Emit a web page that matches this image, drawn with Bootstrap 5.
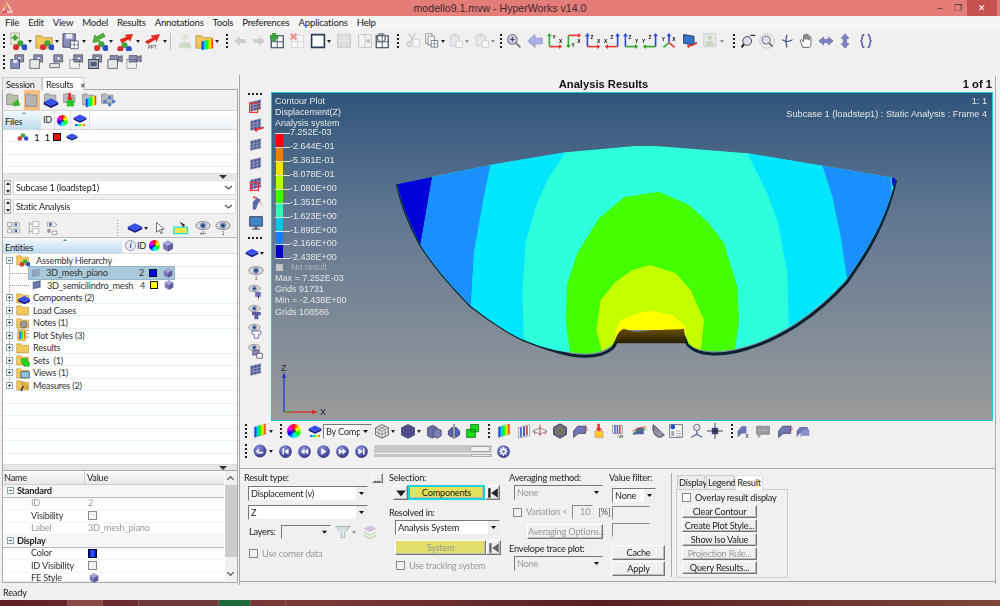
<!DOCTYPE html>
<html lang="en">
<head>
<meta charset="UTF-8">
<title>modello9.1.mvw - HyperWorks v14.0</title>
<link href="https://cdn.jsdelivr.net/npm/bootstrap@5.3.0/dist/css/bootstrap.min.css" rel="stylesheet">
<style>
html,body{height:606px;overflow:hidden}
body{width:1000px;background:#f0f0f0;color:#222;font:9.2px/1.2 Lato,"Liberation Sans",Arial,sans-serif;letter-spacing:-.22px}
.hw-app{filter:blur(.3px)}
.hw-app button,.hw-app select{letter-spacing:inherit}
svg{display:block;flex:none;overflow:visible}
.hw-title{height:16px;background:#e47d78;position:relative;text-align:center;font:10.6px/17px "Liberation Sans",Arial,sans-serif;letter-spacing:0;color:#3a2a2a}
.hw-logo{position:absolute;left:1px;top:2px;width:12px;height:12px}
.hw-winbtns{position:absolute;right:3px;top:0;height:16px}
.hw-winbtn{width:18px;text-align:center;font-size:9px;line-height:16px;color:#3a2a2a}
.hw-close{width:30px;background:#c75050;color:#fff}
.hw-menu{height:14px;background:#f5f5f5;padding-left:5px;gap:9px;line-height:14px;font-size:9.6px;margin-bottom:0}
.hw-menu li{list-style:none}
.hw-tb{height:22px;padding-left:3px}
.hw-tb2{height:20px;padding-left:3px;margin-bottom:3px}
.hw-dots{width:2px;height:17px;margin-right:2px;flex:none;background:radial-gradient(circle,#222 .9px,transparent 1px) 0 0/2px 4px repeat-y}
.hw-ic{width:19px;height:19px}
.hw-ic16{width:16px;height:16px}
.hw-ic15{width:15px;height:15px}
.hw-ic14{width:14px;height:14px}
.hw-ic12{width:12px;height:12px}
.hw-car{width:8px;height:12px;flex:none;position:relative}
.hw-car::after{content:"";position:absolute;left:1px;top:5px;border:2.5px solid transparent;border-top:3px solid #222;border-bottom:0}
.hw-faint{opacity:.45}
.hw-l1{margin-left:1px}.hw-l2{margin-left:2px}.hw-l3{margin-left:3px}.hw-l4{margin-left:4px}.hw-l5{margin-left:5px}.hw-l6{margin-left:6px}.hw-l7{margin-left:7px}.hw-l8{margin-left:8px}
.hw-vsep{width:1px;height:17px;background:#bbb;flex:none}
.hw-main{height:510px}
.hw-left{width:238px;flex:none;padding:2px 0 0 2px}
.hw-tabs{height:13px;border-bottom:1px solid #aaa;flex-wrap:nowrap}
.hw-tabs .nav-link{padding:0 2px 0 3px;width:40px;height:13px;line-height:13px;color:#222;border:1px solid #ccc;border-bottom:0;border-radius:0;margin:0;background:#ececec;white-space:nowrap;font-size:inherit}
.hw-tabs .nav-link.active{background:#fff;color:#222;border-color:#ccc;width:42px}
.hw-tabs .hw-x{margin-left:7px;font-size:7px}
.hw-box{border:1px solid #aaa;border-top:0;height:493px;background:#f0f0f0}
.hw-strip{height:20px;gap:3px;padding-left:2px;background:#f0f0f0}
.hw-hot{background:#f9bf80;align-self:stretch;display:flex;align-items:center}
.hw-head{height:20px;background:linear-gradient(#fff,#eef2f6);border-top:1px solid #d5d5d5;border-bottom:1px solid #d8d8d8;position:relative}
.hw-sort{background:linear-gradient(#f4fafd,#bcdcef);height:100%;padding:5px 0 0 2px;position:relative}
.hw-sort::after{content:"";position:absolute;left:50%;top:1px;border:2px solid transparent;border-bottom:2px solid #58a;border-top:0}
.hw-files{width:38px}
.hw-cell{padding:0 2px;height:100%;border-right:1px solid #ddd}
.hw-wheel{width:11px;height:11px;flex:none;border-radius:50%;background:radial-gradient(circle,#444 0 14%,transparent 18%),conic-gradient(#f00,#ff0,#0f0,#0ff,#00f,#f0f,#f00)}
.hw-wheel14{width:14px;height:14px}
.hw-lines{background:#fff repeating-linear-gradient(#fff 0 11.5px,#e7f2f9 11.5px 12.5px)}
.hw-filelist{height:43px;padding:0 0 0 13px;font-size:10px;color:#111}
.hw-filerow{height:13px}
.hw-sq{width:8px;height:8px;border:1px solid #111;flex:none}
.hw-red{background:#f00}.hw-blue{background:#00f}.hw-yel{background:#ff0}
.hw-split{height:6px;background:#e6e6e6;position:relative;border-top:1px solid #ddd}
.hw-split::after{content:"";position:absolute;right:10px;top:1px;border:4px solid transparent;border-top:4px solid #333;border-bottom:0}
.hw-selrow{height:15px;margin:1px 1px 4px 1px}
.hw-spin{width:7px;height:15px;flex:none;margin-right:2px;background:#fafafa;border:1px solid #aaa;position:relative}
.hw-spin::before,.hw-spin::after{content:"";position:absolute;left:.5px;border:2px solid transparent}
.hw-spin::before{top:1px;border-bottom:3px solid #222;border-top:0}
.hw-spin::after{bottom:1px;border-top:3px solid #222;border-bottom:0}
.hw-sel.form-select{height:15px;min-height:0;padding:0 14px 0 2px;font-size:inherit;line-height:13px;color:#222;border:1px solid;border-color:#777 #eee #eee #777;border-radius:0;background:#fff url("data:image/svg+xml,%3Csvg xmlns='http://www.w3.org/2000/svg' width='11' height='13'%3E%3Crect width='11' height='13' fill='%23eee'/%3E%3Cpath d='M3 5h5l-2.5 3z' fill='%23111'/%3E%3C/svg%3E") no-repeat right 0 center/11px 13px;box-shadow:none}
.hw-sel.hw-plain.form-select{background:#fff url("data:image/svg+xml,%3Csvg xmlns='http://www.w3.org/2000/svg' width='11' height='13'%3E%3Cpath d='M2 5l3.5 3L9 5' fill='none' stroke='%23555' stroke-width='1.2'/%3E%3C/svg%3E") no-repeat right 1px center/11px 13px;border:1px solid #ddd}
.hw-sel.form-select:disabled{background-color:#f0f0f0;color:#999}
.hw-tools{height:19px;padding-left:3px}
.hw-dotsb{width:1px;height:17px;margin-left:56px;margin-right:9px;flex:none;background:radial-gradient(circle,#999 .6px,transparent .7px) 0 0/1px 3px repeat-y}
.hw-entities{height:17px;position:relative;border-top:1px solid #bbb;border-bottom:1px solid #ddd;background:#f4f4f4}
.hw-entities .hw-sort{width:119px;padding-top:4px}
.hw-info{width:11px;height:11px;border-radius:50%;background:#e9e9f4;border:1px solid #99b;color:#44a;font:italic bold 8px/9px "Liberation Serif",serif;text-align:center;flex:none}
.hw-tree{height:210px;position:relative;color:#333}
.hw-tree::before{content:"";position:absolute;left:6px;top:8px;height:122px;border-left:1px dotted #999}
.hw-node{height:12.5px;position:relative;padding-left:2px;gap:3px;white-space:nowrap}
.hw-exp{width:7px;height:7px;flex:none;border:1px solid #8aa;background:#fff;margin-left:1px;position:relative;z-index:1}
.hw-exp::before{content:"";position:absolute;left:1px;right:1px;top:2px;height:1px;background:#456}
.hw-plus::after{content:"";position:absolute;top:1px;bottom:1px;left:2px;width:1px;background:#456}
.hw-child{padding-left:27px;gap:2px}
.hw-child::before{content:"";position:absolute;left:7px;top:6px;width:19px;border-top:1px dotted #999}
.hw-selected{background:#a9c9da;width:145px;margin-left:26px;padding-left:1px;outline:1px solid #8fb6cc}
.hw-selected::before{left:-19px;width:19px}
.hw-childname{margin-left:2px;width:84px}
.hw-num{width:12px;text-align:right;margin-right:3px}
.hw-propwrap{height:111px;border-top:1px solid #aaa;background:#fff}
.hw-props{width:221px;flex:none}
.hw-phead{height:14px;line-height:14px;background:linear-gradient(#fdfdfd,#e8e8e8);border-bottom:1px solid #ccc}
.hw-phead span:first-child{width:82px;padding-left:1px;border-right:1px solid #ccc}
.hw-phead span:last-child{padding-left:2px}
.hw-group{height:12.5px;line-height:12.5px;font-weight:bold;background:#f6f6f6;border-bottom:1px solid #bbb;gap:3px;padding-left:3px}
.hw-prop{height:12.5px;line-height:12px;border-bottom:1px solid #eef4f8;padding-left:28px;color:#333}
.hw-prop>span:first-child{width:57px}
.hw-dim{color:#999}
.hw-check{appearance:none;width:9px;height:9px;flex:none;margin:0;border-radius:0;border:1px solid #888;background:#f2f2f2}
.hw-colorbar{width:9px;height:9px;background:linear-gradient(90deg,#00c,#36f 50%,#00c);border:1px solid #002;flex:none}
.hw-scroll{width:12px;flex:none;background:#f0f0f0;position:relative;padding-top:12px;margin-left:1px;height:100%}
.hw-scroll::before,.hw-scroll::after{content:"";position:absolute;left:3px;width:5px;height:5px;border:solid #444;border-width:1px 0 0 1px;transform:rotate(45deg)}
.hw-scroll::before{top:6px}
.hw-scroll::after{bottom:6px;transform:rotate(225deg)}
.hw-thumb{height:72px;background:#cdcdcd;margin-top:2px}
.hw-right{width:760px;flex:none;border-left:1px solid #a8a8a8;margin-left:1px;position:relative}
.hw-right::after{content:"";position:absolute;right:3px;top:1px;height:508px;border-right:1px solid #aaa}
.hw-vhead{height:15px;margin-top:2px;width:753px;font:bold 11.2px/15px "Liberation Sans",Arial,sans-serif;letter-spacing:0;color:#111;position:relative;text-align:center;padding-right:26px}
.hw-pagecount{position:absolute;right:1px;top:0}
.hw-vrow{height:329px}
.hw-side{width:31px;flex:none;padding-top:1px;align-items:center}
.hw-hdots{width:17px;height:3px;flex:none;background:radial-gradient(circle,#222 .8px,transparent .9px) 0 0/4px 2px repeat-x;margin:0}
.hw-slot{height:19.5px;width:100%;justify-content:center;align-items:center}
.hw-view{width:722px;flex:none;height:329px;position:relative;border:1px solid #19c9d8;background:linear-gradient(#2f5479,#5d7491 34%,#9a9b9b);color:#e6e6e6;font:9px/1.2 "Liberation Sans",Arial,sans-serif;letter-spacing:0;overflow:hidden}
.hw-shape{position:absolute;left:117px;top:47px;width:520px;height:250px}
.hw-legend{position:absolute;left:3px;top:3px;line-height:11.1px}
.hw-scale{position:relative;padding-left:15px;margin:-3px 0 0 0}
.hw-val{height:13.9px;line-height:13.9px;position:relative}
.hw-val::before{content:"";position:absolute;left:-15px;width:15px;top:7px;border-top:1px solid #ddd}
.hw-bar{position:absolute;left:1px;top:7px;width:7px}
.hw-bar div{height:13.9px}
.hw-b1{background:#f00}.hw-b2{background:#ff7a00}.hw-b3{background:#ffe000}.hw-b4{background:#b4ff00}.hw-b5{background:#3cff00}.hw-b6{background:#2dffb4}.hw-b7{background:#00c8e6}.hw-b8{background:#1a7dff}.hw-b9{background:#0000c8}
.hw-nores{color:#b5b5b5;padding-left:16px;position:relative;margin-top:-3px}
.hw-nores::before{content:"";position:absolute;left:1px;top:2px;width:7px;height:7px;background:#c4c4c4}
.hw-topright{position:absolute;right:5px;top:2px;text-align:right;line-height:13px;font-size:9.2px}
.hw-triad{position:absolute;left:2px;bottom:2px;width:60px;height:52px}
.hw-tb3{height:20px;padding-left:5px}
.hw-sel.hw-combo.form-select{width:49px;margin-left:1px;background-color:#fff;padding-right:11px}
.hw-sbar{width:118px;flex:none;margin-left:5px}
.hw-s1{height:8px;background:#c6c6c6;border:1px solid #ccc;position:relative;margin-bottom:1px}
.hw-s2{height:3px;background:#c6c6c6;position:relative}
.hw-knob{position:absolute;right:1px;top:0;width:20px;height:100%;background:#eee;border:1px solid #aaa}
.hw-panel{height:114px;padding:4px 0 0 4px;margin-top:7px;border-top:1px solid #a8a8a8;border-bottom:1px solid #a8a8a8;width:755px}
.hw-c1{width:141px;flex:none}
.hw-c2{width:116px;margin-left:4px;flex:none}
.hw-c3{width:96px;margin-left:4px;flex:none}
.hw-c4{width:60px;margin-left:4px;flex:none}
.hw-c5{margin-left:4px;width:112px;flex:none}
.hw-vbar{width:1px;height:104px;background:#aaa;margin-left:2px;flex:none}
.hw-lab{height:10px;line-height:10px;white-space:nowrap}
.hw-btn.btn{border-radius:0;height:14px;padding:0;font-size:inherit;line-height:12px;color:#222;background:#f0f0f0;border:1px solid;border-color:#fff #777 #777 #fff;box-shadow:inset -1px -1px 0 #bbb;white-space:nowrap}
.hw-btn.btn:disabled{color:#999;opacity:1;background:#f0f0f0;border-color:#fff #777 #777 #fff}
.hw-dotbtn.btn{width:11px;height:10px;line-height:5px;margin-left:auto;margin-right:2px}
.hw-f1{margin:3px 0 0 4px;width:120px}
.hw-f2{margin:4px 0 0 4px;width:120px}
.hw-layers{margin:5px 0 0 5px;height:14px}
.hw-laysel.form-select{width:50px;height:14px;margin-left:5px}
.hw-chkrow{gap:4px;color:#999;white-space:nowrap}
.hw-cr1{margin:9px 0 0 5px}
.hw-selbtns{margin:2px 0 0 4px;height:15px;width:107px}
.hw-hbtn.btn{width:15px;height:15px;flex:none;font-size:7px}
.hw-yellow.btn{background:#e4e25d;height:15px;flex:1}
.hw-yellow.btn:disabled{background:#e2e06a;color:#999}
.hw-active.btn{border:2px solid #19d3d8}
.hw-lab2{margin-top:8px}
.hw-f3{margin:2px 0 0 6px;width:105px}
.hw-selbtns2{margin:5px 0 0 6px;height:15px;width:106px}
.hw-cr2{margin:5px 0 0 7px}
.hw-f4{margin:2px 0 0 5px;width:89px}
.hw-cr3{margin:5px 0 0 4px;height:14px}
.hw-num10{width:21px;height:14px;margin-left:1px;border:1px solid;border-color:#888 #eee #eee #888;color:#999;text-align:right;padding-right:2px;line-height:12px;flex:none}
.hw-pct{margin-left:1px;color:#555}
.hw-optbtn.btn{width:76px;margin:5px 0 0 18px;height:15px}
.hw-lab3{margin:5px 0 0 0}
.hw-f5.form-select{margin:5px 0 0 3px;width:44px;background-color:#fff}
.hw-input{width:38px;height:14px;margin:3px 0 0 3px;border:1px solid;border-color:#888 #eee #eee #888;background:#f0f0f0}
.hw-bigbtn.btn{width:53px;height:15px;margin:8px 0 0 3px;display:block}
.hw-bigbtn.hw-next.btn{margin-top:1px}
.hw-minitabs{height:14px;margin-top:2px;gap:1px;padding-left:1px;border:0;flex-wrap:nowrap}
.hw-minitabs .nav-link{padding:0 1px;height:14px;width:28px;text-align:center;font-size:inherit;line-height:13px;color:#222;border:1px solid #ccc;border-bottom:0;border-radius:0;background:#ececec;margin:0}
.hw-minitabs .nav-link.active{background:#fff;color:#222;height:15px;position:relative;z-index:1}
.hw-tabbox{width:112px;height:89px;border:1px solid #ccc;padding:3px 0 0 5px}
.hw-tabbtn.btn{display:block;width:75px;height:13px;margin-bottom:1px;line-height:11px}
.hw-ovl{gap:4px;margin-bottom:3px;height:9px;white-space:nowrap}
.hw-check.hw-w{background:#fff}
.hw-status{height:15px;line-height:15px;padding-left:3px}
.hw-task{height:6px;background:linear-gradient(90deg,#5e2026,#7a3b38 30%,#5a1d22 60%,#7d4638)}
.hw-task div{height:100%;border-right:1px solid #8c5a55}
.hw-t1{width:68px}.hw-t2{width:35px;background:#8a4a45}.hw-t3{width:36px}.hw-t4{width:80px;background:#6d3a3a}.hw-t5{width:32px;background:#1d6a3d}.hw-t6{width:35px}
</style>
</head>
<body>
<svg width="0" height="0" class="position-absolute">
<defs>
<linearGradient id="rbw" x1="0" x2="1" y1="0" y2="0"><stop offset="0" stop-color="#00f"/><stop offset=".25" stop-color="#0cf"/><stop offset=".5" stop-color="#0f0"/><stop offset=".75" stop-color="#ff0"/><stop offset="1" stop-color="#f00"/></linearGradient>
<radialGradient id="med" cx=".4" cy=".3" r=".8"><stop offset="0" stop-color="#8e94d8"/><stop offset=".6" stop-color="#4d53a5"/><stop offset="1" stop-color="#2c3178"/></radialGradient>
<linearGradient id="notch" x1="0" x2="0" y1="0" y2="1"><stop offset="0" stop-color="#6b5000"/><stop offset="1" stop-color="#1a1500"/></linearGradient>
<g id="balls"><circle cx="10" cy="11" r="3.2" fill="#3ca83c"/><circle cx="5.5" cy="15" r="3.2" fill="#d63030"/><circle cx="14.5" cy="15" r="3.2" fill="#2c4fc4"/></g>
<path id="folder" d="M1 4h6l2 2h9v11H1z" fill="#f2c75c" stroke="#b88c2e" stroke-width=".8"/>
<g id="win"><path d="M1.5 2.5h15v15h-15z" fill="#fff" stroke="#2a3a55" stroke-width="1.4"/><path d="M9 2.5v15M1.5 10h15" stroke="#2a3a55"/></g>
<g id="grid"><path d="M3 5l13-3v12L3 17z" fill="#4e5a98" stroke="#bbb" stroke-width=".6"/><path d="M7 4v12M11.500 3v12M3 9.500l13-3M3 13l13-3" stroke="#c8c8d8" stroke-width=".6"/></g>
<g id="eyeb"><ellipse cx="10" cy="7" rx="9" ry="5" fill="#d8d8d8" stroke="#777"/><circle cx="10" cy="7" r="3.500" fill="#5c78b8"/><circle cx="10" cy="7" r="1.300" fill="#123"/></g>
<g id="cubep"><path d="M10 2l7 4v8l-7 4-7-4V6z" fill="#7a78b8"/><path d="M10 2l7 4-7 4-7-4z" fill="#a6a4d8"/><path d="M10 10v8l7-4V6z" fill="#5f5c9c"/></g>
<g id="slab"><path d="M10 12l9-4.500v3L10 15 1 10.500v-3z" fill="#131a8a"/><path d="M10 3l9 4.500-9 4.500-9-4.500z" fill="#3350e8"/></g>
<g id="cam"><path d="M6 1h11v9H6z" fill="#8d8dba" stroke="#555"/><circle cx="12" cy="5.500" r="2.500" fill="#dde" stroke="#444" stroke-width=".6"/></g>
<symbol id="i-balls" viewBox="0 0 20 20"><use href="#balls" y="-3"/></symbol>
<symbol id="i-folder" viewBox="0 0 20 20"><use href="#folder"/></symbol>
<symbol id="i-new" viewBox="0 0 20 20"><path d="M3 1h9v12H3z" fill="#f6f1d0" stroke="#aaa"/><path d="M6 3h3v2h2v2H9v2H6V7H4V5h2z" fill="#3aa53a"/><use href="#balls" y="1" x="3"/></symbol>
<symbol id="i-open" viewBox="0 0 20 20"><use href="#folder"/><use href="#balls" x="3" y="1"/></symbol>
<symbol id="i-comp" viewBox="0 0 20 20"><use href="#folder"/><use href="#slab" x="2" y="4"/></symbol>
<symbol id="i-notes" viewBox="0 0 20 20"><use href="#folder"/><circle cx="11" cy="12" r="5" fill="#999" stroke="#666"/></symbol>
<symbol id="i-sets" viewBox="0 0 20 20"><use href="#folder"/><path d="M8 8h8v5h3v6h-8v-4H8z" fill="#1fd91f" stroke="#0a7a0a" stroke-width=".6"/></symbol>
<symbol id="i-views" viewBox="0 0 20 20"><use href="#folder"/><path d="M7 8h12v9H7z" fill="#8fc4e6" stroke="#345"/></symbol>
<symbol id="i-meas" viewBox="0 0 20 20"><use href="#folder"/><path d="M6 18l5-10 2 1-5 10z" fill="#334"/><path d="M10 5l8 8-3 3-8-8z" fill="#e2b23c" stroke="#654" stroke-width=".5"/></symbol>
<symbol id="i-styles" viewBox="0 0 20 20"><path d="M2 2h12v16H2z" fill="#f2c75c" stroke="#b88c2e" stroke-width=".7"/><path d="M5 5l8-1v11l-8 1z" fill="url(#rbw)"/><path d="M15 3h3M15 8h3M15 13h3" stroke="#444"/></symbol>
<symbol id="i-save" viewBox="0 0 20 20"><path d="M1 2h13v14H1z" fill="#8a8ec0" stroke="#445"/><path d="M4 2h7v5H4z" fill="#e8e8f4"/><g transform="translate(8 8) scale(.55)"><use href="#win"/></g></symbol>
<symbol id="i-ag" viewBox="0 0 20 20"><path d="M15 1L8 5 6 3 4 11l8-1-2-2 7-3z" fill="#49b530" stroke="#2a7a1a" stroke-width=".5"/><use href="#balls" x="3" y="2"/></symbol>
<symbol id="i-ar" viewBox="0 0 20 20"><path d="M4 8l7-3-2-2 9-1-3 8-2-2-7 4z" fill="#e22c20"/><use href="#balls" x="-1" y="3"/></symbol>
<symbol id="i-ppt" viewBox="0 0 20 20"><path d="M2 10l8-4-2-2 10-2-4 9-1-3-8 5z" fill="#e22c20"/><text x="5" y="18" font-size="5" fill="#444" font-family="Liberation Sans">PPT</text></symbol>
<symbol id="i-person" viewBox="0 0 20 20"><circle cx="10" cy="5" r="4" fill="#c9d8bb"/><path d="M2 19c0-6 3-8 8-8s8 2 8 8z" fill="#a6c89a"/></symbol>
<symbol id="i-fcol" viewBox="0 0 20 20"><use href="#folder"/><path d="M7 10l12-3v10l-12 2z" fill="url(#rbw)"/></symbol>
<symbol id="i-l" viewBox="0 0 20 20"><path d="M2 10l8-7v4h8v6h-8v4z" fill="#ccc"/></symbol>
<symbol id="i-r" viewBox="0 0 20 20"><path d="M18 10l-8-7v4H2v6h8v4z" fill="#ccc"/></symbol>
<symbol id="i-wadd" viewBox="0 0 20 20"><use href="#win" y="1"/><path d="M3 0h4v3h3v4H7v3H3V7H0V3h3z" fill="#3aa53a" stroke="#1f6a1f" stroke-width=".5"/></symbol>
<symbol id="i-wdel" viewBox="0 0 20 20" opacity=".55"><path d="M2 3h15v15H2z" fill="#fff" stroke="#bbb"/><path d="M9.500 3v15M2 10.500h15" stroke="#bbb"/><path d="M1 1l7 7M8 1L1 8" stroke="#e43" stroke-width="2.600"/></symbol>
<symbol id="i-wbig" viewBox="0 0 20 20"><path d="M2 2h16v16H2z" fill="#fff" stroke="#2a3a55" stroke-width="2"/></symbol>
<symbol id="i-wg1" viewBox="0 0 20 20"><path d="M2 2h16v16H2z" fill="#ddd" stroke="#bbb"/><path d="M10 2v16M2 10h16" stroke="#eee"/></symbol>
<symbol id="i-wg2" viewBox="0 0 20 20"><path d="M2 2h16v16H2z" fill="#f2f2f2" stroke="#bbb"/><path d="M10 2v16" stroke="#bbb"/><path d="M12 8h4v4h-4z" fill="#bbb"/></symbol>
<symbol id="i-wsync" viewBox="0 0 20 20"><use href="#win" y="1"/><circle cx="8" cy="6" r="5" fill="none" stroke="#777" stroke-width="2"/></symbol>
<symbol id="i-cut" viewBox="0 0 20 20" opacity=".5"><path d="M5 1l6 10M13 1L7 11" stroke="#999" stroke-width="1.500"/><circle cx="5" cy="14" r="2.600" fill="none" stroke="#999" stroke-width="1.500"/><path d="M10 8h8v9h-8z" fill="#fff" stroke="#aaa"/></symbol>
<symbol id="i-copy" viewBox="0 0 20 20"><path d="M2 1h8v12H2z" fill="#fff" stroke="#777"/><path d="M5 4h8v11H5z" fill="#fff" stroke="#777"/><g transform="translate(8 8) scale(.55)"><use href="#win"/></g></symbol>
<symbol id="i-paste" viewBox="0 0 20 20" opacity=".45"><path d="M3 3h11v13H3z" fill="#d4daf0" stroke="#999"/><path d="M6 1h5v3H6z" fill="#aaa"/><path d="M10 10h8v8h-8z" fill="#fff" stroke="#999"/></symbol>
<symbol id="i-zoomb" viewBox="0 0 20 20"><circle cx="8" cy="8" r="6" fill="#c9cbe2" stroke="#777" stroke-width="1.300"/><path d="M12 12l6 6" stroke="#777" stroke-width="2.500"/><path d="M5 8h6M8 5v6" stroke="#445" stroke-width="1.200"/></symbol>
<symbol id="i-pl" viewBox="0 0 20 20"><path d="M1 10l9-8v4.500h9v7h-9V18z" fill="#aeb0e8" stroke="#8d8fc8"/></symbol>
<symbol id="i-screen" viewBox="0 0 20 20"><path d="M2 2l13 2v11L2 13z" fill="#2d77c9" stroke="#224"/><path d="M18 11l-9 5v-2.500l-3 3 3 3v-2l10-4z" fill="#e22c20"/></symbol>
<symbol id="i-ghost" viewBox="0 0 20 20" opacity=".6"><path d="M1 1h15v16H1z" fill="#dfe6e2" stroke="#aaa"/><circle cx="8.500" cy="6" r="3" fill="#a9c69c"/><path d="M3 16c0-4 2-6 5.500-6s5.500 2 5.500 6z" fill="#a9c69c"/></symbol>
<symbol id="i-zm" viewBox="0 0 20 20"><circle cx="9" cy="10" r="5.500" fill="#dfe0ef" stroke="#444" stroke-width="1.200"/><path d="M5 14l-3 4" stroke="#222" stroke-width="2.500"/><path d="M13 3h6" stroke="#333" stroke-width="1.600"/></symbol>
<symbol id="i-zg" viewBox="0 0 20 20"><circle cx="10" cy="10" r="9" fill="none" stroke="#999" stroke-dasharray="2 1.500"/><circle cx="9" cy="9" r="5" fill="#dfe0ef" stroke="#666" stroke-width="1.200"/><path d="M13 13l4 4" stroke="#666" stroke-width="2.200"/></symbol>
<symbol id="i-rot" viewBox="0 0 20 20"><path d="M10 1c-2 6-2 12 0 18M3 8c5 4 9 4 15 0" fill="none" stroke="#334a78" stroke-width="1.600"/></symbol>
<symbol id="i-hand" viewBox="0 0 20 20"><path d="M5 18C3 13 1 11 2 9s3 1 3.500 2V4c0-2 2-2 2 0v4V2.500c0-2 2.500-2 2.500 0V8V3.500c0-2 2.500-2 2.500 0V9V6c0-2 2.500-2 2.500 0v7c0 3-1 5-2 5z" fill="#fff" stroke="#333" stroke-width=".9"/></symbol>
<symbol id="i-hh" viewBox="0 0 20 20"><path d="M1 10l6-5v3h6V5l6 5-6 5v-3H7v3z" fill="#7d80c6" stroke="#4b4e92" stroke-width=".6"/></symbol>
<symbol id="i-vv" viewBox="0 0 20 20"><path d="M10 1l5 6h-3v6h3l-5 6-5-6h3V7H5z" fill="#7d80c6" stroke="#4b4e92" stroke-width=".6"/></symbol>
<symbol id="i-br" viewBox="0 0 20 20"><path d="M8 2C3 2 7 10 3 10c4 0 0 8 5 8M12 2c5 0 1 8 5 8-4 0 0 8-5 8" fill="none" stroke="#5f62aa" stroke-width="2"/></symbol>
<symbol id="c1" viewBox="0 0 20 20"><use href="#cam"/><path d="M1 7h11v11H1z" fill="#8a8ec0" stroke="#345"/><path d="M4 7h5v4H4z" fill="#eee"/></symbol>
<symbol id="c2" viewBox="0 0 20 20"><use href="#cam"/><path d="M1 7h12v11H1z" fill="#e8e8e8" stroke="#456"/></symbol>
<symbol id="c3" viewBox="0 0 20 20"><use href="#cam"/><path d="M1 12h12v5H1z" fill="#e8e8e8" stroke="#456"/></symbol>
<symbol id="c4" viewBox="0 0 20 20"><use href="#cam"/><path d="M1 7h12v11H1z" fill="none" stroke="#456" stroke-dasharray="1.500 1"/></symbol>
<symbol id="c5" viewBox="0 0 20 20"><use href="#cam"/><path d="M1 7h12v11H1z" fill="#cfd6e6" stroke="#345" stroke-width="1.400"/><path d="M3 9.500h8v6H3z" fill="#557"/></symbol>
<symbol id="c6" viewBox="0 0 20 20"><path d="M4 2h10v8H4z" fill="#8d8dba" stroke="#555"/><path d="M14 4l5-2v8l-5-2z" fill="#8d8dba" stroke="#555"/><path d="M1 7h12v11H1z" fill="#e8e8e8" stroke="#456"/></symbol>
<symbol id="c7" viewBox="0 0 20 20"><path d="M4 2h10v8H4z" fill="#8d8dba" stroke="#555"/><path d="M14 4l5-2v8l-5-2z" fill="#8d8dba" stroke="#555"/><path d="M1 7h12v11H1z" fill="none" stroke="#456" stroke-dasharray="1.500 1"/></symbol>
<symbol id="p1" viewBox="0 0 20 20"><path d="M2 3l5-1 2 2h7v12H2z" fill="#b6c0a6" stroke="#8a8a8a"/><path d="M7 16l9-7v-1l3 9-9 1 2-3-3 1z" fill="#3fb52a"/></symbol>
<symbol id="p2" viewBox="0 0 20 20"><path d="M2 3l5-1 2 2h7v14H2z" fill="#b4b4b4" stroke="#888"/></symbol>
<symbol id="p3" viewBox="0 0 20 20"><path d="M2 3l5-1 2 2h7v9H2z" fill="#bbb" stroke="#888"/><use href="#slab" y="5"/></symbol>
<symbol id="p4" viewBox="0 0 20 20"><path d="M2 3l5-1 2 2h7v9H2z" fill="#bbb" stroke="#888"/><path d="M8 1h3v6h3l-4 5-4-5h2z" fill="#e22"/><path d="M6 10h9v8H6z" fill="#2cc52c"/></symbol>
<symbol id="p5" viewBox="0 0 20 20"><path d="M2 3l5-1 2 2h7v12H2z" fill="#bbb" stroke="#888"/><path d="M6 9l13-5v12L6 19z" fill="url(#rbw)"/></symbol>
<symbol id="p6" viewBox="0 0 20 20"><path d="M2 3l5-1 2 2h7v10H2z" fill="#bbb" stroke="#888"/><circle cx="12" cy="7" r="2.200" fill="#4c7ac8"/><circle cx="12" cy="16" r="2.200" fill="#4c7ac8"/><circle cx="6" cy="12" r="2.200" fill="#4c7ac8"/><circle cx="17" cy="12" r="2.200" fill="#4c7ac8"/><path d="M6 12L12 7M6 12l6 4M12 7l5 5" stroke="#4c7ac8"/></symbol>
<symbol id="i-cube" viewBox="0 0 20 20"><use href="#slab" y="-1"/><rect x="3" y="16" width="14" height="2.500" fill="url(#rbw)"/></symbol>
<symbol id="i-slab" viewBox="0 0 20 20"><use href="#slab" y="1"/></symbol>
<symbol id="i-cubep" viewBox="0 0 20 20"><use href="#cubep"/></symbol>
<symbol id="i-ls" viewBox="0 0 20 20"><path d="M2 3h5v5H2zM2 11h5v5H2z" fill="#f4f4f4" stroke="#999"/><path d="M9 3h8v5H9zM9 11h8v5H9z" fill="#fff" stroke="#999"/><path d="M11 4h3v3h-3zM11 12h3v3h-3z" fill="#35a"/><path d="M4.500 8v3" stroke="#999"/></symbol>
<symbol id="i-ls2" viewBox="0 0 20 20"><path d="M4 2v15M4 5h4M4 14h4" stroke="#999" fill="none"/><path d="M8 2h8v6H8zM8 11h8v6H8z" fill="#fff" stroke="#aaa"/></symbol>
<symbol id="i-ls3" viewBox="0 0 20 20"><path d="M3 3h6v5H3z" fill="#fff" stroke="#999"/><path d="M5 4h3v3H5z" fill="#35a"/><path d="M11 3l4 3-4 3M9 14h6v4H9z" fill="#fff" stroke="#888"/><path d="M3 11h4v5H3z" fill="#999"/></symbol>
<symbol id="i-cursor" viewBox="0 0 20 20"><path d="M5 2v14l4-3 2.500 5 2-1-2.500-5 5 0z" fill="#fff" stroke="#333"/></symbol>
<symbol id="i-ysel" viewBox="0 0 20 20"><path d="M1 9h17v8H1z" fill="#eee64a" stroke="#2dd" stroke-width="1.600"/><path d="M8 2l7 4-2 3-3-4z" fill="#334"/></symbol>
<symbol id="i-eye1" viewBox="0 0 20 20"><use href="#eyeb"/><text x="10" y="19" font-size="6" text-anchor="middle" fill="#444" font-family="Liberation Sans">1</text></symbol>
<symbol id="i-eyepm" viewBox="0 0 20 20"><use href="#eyeb"/><text x="10" y="19" font-size="6" text-anchor="middle" fill="#444" font-weight="bold" font-family="Liberation Sans">+/−</text></symbol>
<symbol id="e1" viewBox="0 0 20 20"><g transform="scale(.8)"><use href="#eyeb"/></g><path d="M9 10h7v6H9z" fill="#6c6ab0"/><path d="M13 15v4" stroke="#222"/></symbol>
<symbol id="e2" viewBox="0 0 20 20"><g transform="scale(.8)"><use href="#eyeb"/></g><path d="M5 10h11v4h-3v5H8v-5H5z" fill="#5c5aa4"/></symbol>
<symbol id="e3" viewBox="0 0 20 20"><g transform="scale(.8)"><use href="#eyeb"/></g><path d="M5 10h11v4h-3v5H8v-5H5z" fill="#fff" stroke="#5c5aa4"/></symbol>
<symbol id="e4" viewBox="0 0 20 20"><g transform="scale(.8)"><use href="#eyeb"/></g><path d="M6 9h8v6H6z" fill="#8d8cc4" stroke="#446"/><path d="M11 13h7v6h-7z" fill="#fff" stroke="#446"/></symbol>
<symbol id="g1" viewBox="0 0 20 20"><use href="#grid"/><path d="M2 6h10v12H2z" fill="none" stroke="#e33" stroke-width="1.500"/></symbol>
<symbol id="g2" viewBox="0 0 20 20"><use href="#grid"/><path d="M19 12l-8 3v-2l-4 3 4 3v-2l9-3z" fill="#e22"/></symbol>
<symbol id="g3" viewBox="0 0 20 20"><use href="#grid"/></symbol>
<symbol id="g5" viewBox="0 0 20 20"><use href="#grid"/><path d="M3 8h10v10H3z" fill="none" stroke="#e33" stroke-width="1.500"/></symbol>
<symbol id="g6" viewBox="0 0 20 20"><path d="M6 18V9l5-6 5 3-4 6-2 6z" fill="#556ca8"/><circle cx="8" cy="3" r="1.500" fill="#e33"/><path d="M10 2l8 11" stroke="#e33" stroke-dasharray="2 1"/></symbol>
<symbol id="g7" viewBox="0 0 20 20"><path d="M2 2h16v12H2z" fill="#3f85c8" stroke="#334"/><path d="M8 14h4v3H8zM5 17h10v1.500H5z" fill="#667"/></symbol>
<symbol id="b-ct" viewBox="0 0 20 20"><path d="M3 5l14-4v13L3 18z" fill="url(#rbw)" stroke="#999" stroke-width=".5"/></symbol>
<symbol id="b-cl" viewBox="0 0 20 20"><circle cx="10" cy="10" r="8" fill="url(#med)"/><path d="M6 11h8v2H6zM8 7l-4 4.500h5z" fill="#fff"/></symbol>
<symbol id="b-wire" viewBox="0 0 20 20"><path d="M10 2l8 4v9l-8 4-8-4V6z" fill="#eee" stroke="#444"/><path d="M2 6l8 4 8-4M10 10v9M6 4l8 4v9M14 4L6 8v9M2 10.500l8 4 8-4" fill="none" stroke="#555" stroke-width=".7"/></symbol>
<symbol id="b-solid" viewBox="0 0 20 20"><path d="M10 2l8 4v9l-8 4-8-4V6z" fill="#5e5c9e" stroke="#334"/><path d="M2 6l8 4 8-4M10 10v9M6 4l8 4v9M14 4L6 8v9M2 10.500l8 4 8-4" fill="none" stroke="#2c2a66" stroke-width=".7"/></symbol>
<symbol id="b-blocks" viewBox="0 0 20 20"><path d="M2 6l6-3 5 2v11l-5 3-6-3z" fill="#6d6fae" stroke="#445"/><path d="M9 9l5-2 5 2v7l-5 3-5-3z" fill="#7e80bc" stroke="#445"/></symbol>
<symbol id="b-mir" viewBox="0 0 20 20"><path d="M8 5v13L3 15V10zM12 5v13l5-3V10z" fill="#5a62c0" stroke="#335"/><path d="M10 1v19" stroke="#222"/></symbol>
<symbol id="b-gr" viewBox="0 0 20 20"><path d="M7 2h10v9H7zM2 8h11v10H2z" fill="#1fd91f" stroke="#0a7a0a"/></symbol>
<symbol id="b-cs" viewBox="0 0 20 20"><path d="M3 6l14-4v14L3 19z" fill="#fff" stroke="#999"/><path d="M6 5.500v12M10 4.500v12" stroke="#46c" stroke-width="2.500"/><path d="M13.500 3.500v12" stroke="#d44" stroke-width="2.500"/></symbol>
<symbol id="b-ax" viewBox="0 0 20 20"><path d="M1 10l9-4 9 4-9 4z" fill="#eee" stroke="#777"/><path d="M10 2v14M4 14l-2-3M16 14l2-3" stroke="#d33" stroke-width="1.200"/></symbol>
<symbol id="b-hex" viewBox="0 0 20 20"><path d="M10 1l8 4.500v9L10 19l-8-4.500v-9z" fill="#6e6e86" stroke="#223"/><circle cx="10" cy="10" r="3" fill="none" stroke="#2c2"/><path d="M7 7l6 6M13 7l-6 6" stroke="#c33"/></symbol>
<symbol id="b-leg" viewBox="0 0 20 20"><path d="M2 18V10l5-6h10v9H8z" fill="#7077b8" stroke="#445"/><path d="M17 3c3 3 2 7-1 8" stroke="#d33" fill="none"/></symbol>
<symbol id="b-dn" viewBox="0 0 20 20"><path d="M8 1h3v6h3l-4 5-4-5h2z" fill="#e22"/><path d="M5 10h10v8H5z" fill="#fbd426" stroke="#d88"/></symbol>
<symbol id="b-vx" viewBox="0 0 20 20"><path d="M2 3h12v10H2z" fill="#fff" stroke="#888"/><path d="M5 3v10M8 3v10" stroke="#46c" stroke-width="2"/><path d="M11 3v10" stroke="#c44" stroke-width="2"/><text x="9" y="19" font-size="7" fill="#222" font-family="Liberation Sans">vx</text></symbol>
<symbol id="b-w" viewBox="0 0 20 20"><path d="M2 15L8 6h8v8H8z" fill="#5560a8"/><path d="M2 10c5-3 10-5 17-5" stroke="#e22" fill="none"/><path d="M2 13c5-3 10-5 17-5" stroke="#2a2" fill="none"/></symbol>
<symbol id="b-sat" viewBox="0 0 20 20"><path d="M4 2l14 13-5 3C6 18 2 10 4 2z" fill="#828296" stroke="#445"/><path d="M7 7l7 8M5 10l8 6M10 4l5 9" stroke="#ccd" stroke-width=".7"/></symbol>
<symbol id="b-inf" viewBox="0 0 20 20"><path d="M2 2h16v16H2z" fill="#fff" stroke="#556"/><circle cx="6" cy="5" r="3" fill="#224fc4"/><path d="M4 10h4v6H4z" fill="#9ab"/><path d="M10 10h6M10 13h6M10 16h6" stroke="#889"/></symbol>
<symbol id="b-z" viewBox="0 0 20 20"><circle cx="11" cy="5.500" r="4" fill="#dfe0ef" stroke="#556"/><path d="M11 10v4l-7 4M11 14l7 4" stroke="#7a80b8" stroke-width="2" fill="none"/></symbol>
<symbol id="b-t" viewBox="0 0 20 20"><path d="M6 6h8v8H6z" fill="#44467e"/><path d="M10 0v20M0 10h20" stroke="#222"/></symbol>
<symbol id="b-ex" viewBox="0 0 20 20"><path d="M2 18V10l5-6h6v9H7z" fill="#6a73b4"/><text x="12" y="19" font-size="8" fill="#222" font-family="Liberation Sans">x</text></symbol>
<symbol id="b-bub" viewBox="0 0 20 20"><path d="M2 4h16v10H8l-4 4v-4H2z" fill="#9a9aa0" stroke="#888"/><path d="M5 9h10" stroke="#ddd" stroke-dasharray="1.500 1"/></symbol>
<symbol id="b-cl2" viewBox="0 0 20 20"><path d="M2 18V10l4-5h10v8H6z" fill="#7077b8"/><path d="M7 18V12l4-4h7v8H9z" fill="#8a90c8"/></symbol>
<symbol id="b-gear" viewBox="0 0 20 20"><circle cx="10" cy="10" r="8.500" fill="url(#med)"/><circle cx="10" cy="10" r="3" fill="none" stroke="#fff" stroke-width="2"/><path d="M10 4v2.500M10 13.500V16M4 10h2.500M13.500 10H16M6 6l1.800 1.800M12.200 12.200L14 14M14 6l-1.800 1.800M7.800 12.200L6 14" stroke="#fff" stroke-width="1.600"/></symbol>
<symbol id="m1" viewBox="0 0 20 20"><circle cx="10" cy="10" r="8.500" fill="url(#med)"/><path d="M6 6h2v8H6zM14 6v8L8.500 10z" fill="#fff"/></symbol>
<symbol id="m2" viewBox="0 0 20 20"><circle cx="10" cy="10" r="8.500" fill="url(#med)"/><path d="M10 6v8L5 10zM15 6v8l-5-4z" fill="#fff"/></symbol>
<symbol id="m3" viewBox="0 0 20 20"><circle cx="10" cy="10" r="8.500" fill="url(#med)"/><path d="M7 5.500v9l7-4.500z" fill="#fff"/></symbol>
<symbol id="m4" viewBox="0 0 20 20"><circle cx="10" cy="10" r="8.500" fill="url(#med)"/><path d="M5 6v8l5-4zM10 6v8l5-4z" fill="#fff"/></symbol>
<symbol id="m5" viewBox="0 0 20 20"><circle cx="10" cy="10" r="8.500" fill="url(#med)"/><path d="M14 6h-2v8h2zM6 6v8l5.500-4z" fill="#fff"/></symbol>
<symbol id="i-funnel" viewBox="0 0 20 20"><path d="M1 3h18l-7 8v6H8v-6z" fill="#dfe8ea" stroke="#9aa"/><path d="M3 5h14" stroke="#bcd"/></symbol>
<symbol id="i-lay" viewBox="0 0 20 20" opacity=".55"><path d="M10 2l8 4-8 4-8-4z" fill="#b69ad8"/><path d="M2 9l8 4 8-4v2l-8 4-8-4z" fill="#9bd48a"/><path d="M2 13l8 4 8-4v2l-8 4-8-4z" fill="#a0c090"/></symbol>
<symbol id="i-first" viewBox="0 0 10 10"><path d="M1 1h2v8H1zM9 1v8L3.500 5z" fill="#222"/></symbol>
<symbol id="i-firstg" viewBox="0 0 10 10"><path d="M1 1h2v8H1zM9 1v8L3.500 5z" fill="#666"/></symbol>
<symbol id="i-drop" viewBox="0 0 10 10"><path d="M1 3h8L5 8z" fill="#222"/></symbol>
<symbol id="ax-yx" viewBox="0 0 20 20"><path d="M3 3v14" stroke="#2eaa2e" stroke-width="2"/><path d="M3 17h14" stroke="#e33" stroke-width="2"/><path d="M15 14l4 3-4 3z" fill="#e33"/><path d="M0 4l3-4 3 4z" fill="#2eaa2e"/><text x="7" y="7" font-size="6" font-weight="bold" font-family="Liberation Sans">Y</text><text x="15" y="13" font-size="6" font-weight="bold" font-family="Liberation Sans">X</text></symbol>
<symbol id="ax-xy" viewBox="0 0 20 20"><path d="M3 3h14" stroke="#e33" stroke-width="2"/><path d="M3 3v14" stroke="#2eaa2e" stroke-width="2"/><path d="M15 0l4 3-4 3z" fill="#e33"/><path d="M0 15l3 4 3-4z" fill="#2eaa2e"/><text x="7" y="18" font-size="6" font-weight="bold" font-family="Liberation Sans">Y</text><text x="14" y="13" font-size="6" font-weight="bold" font-family="Liberation Sans">X</text></symbol>
<symbol id="ax-zx" viewBox="0 0 20 20"><path d="M3 3v14" stroke="#2b46d8" stroke-width="2"/><path d="M3 17h14" stroke="#e33" stroke-width="2"/><path d="M15 14l4 3-4 3z" fill="#e33"/><path d="M0 4l3-4 3 4z" fill="#2b46d8"/><text x="7" y="7" font-size="6" font-weight="bold" font-family="Liberation Sans">Z</text><text x="15" y="13" font-size="6" font-weight="bold" font-family="Liberation Sans">X</text></symbol>
<symbol id="ax-xz" viewBox="0 0 20 20"><path d="M17 3v14" stroke="#2b46d8" stroke-width="2"/><path d="M3 17h14" stroke="#e33" stroke-width="2"/><path d="M5 14l-4 3 4 3z" fill="#e33"/><path d="M14 4l3-4 3 4z" fill="#2b46d8"/><text x="8" y="7" font-size="6" font-weight="bold" font-family="Liberation Sans">Z</text><text x="0" y="13" font-size="6" font-weight="bold" font-family="Liberation Sans">X</text></symbol>
<symbol id="ax-zy" viewBox="0 0 20 20"><path d="M3 3v14" stroke="#2b46d8" stroke-width="2"/><path d="M3 17h14" stroke="#2eaa2e" stroke-width="2"/><path d="M15 14l4 3-4 3z" fill="#2eaa2e"/><path d="M0 4l3-4 3 4z" fill="#2b46d8"/><text x="7" y="7" font-size="6" font-weight="bold" font-family="Liberation Sans">Z</text><text x="15" y="13" font-size="6" font-weight="bold" font-family="Liberation Sans">Y</text></symbol>
<symbol id="ax-yz" viewBox="0 0 20 20"><path d="M17 3v14" stroke="#2b46d8" stroke-width="2"/><path d="M3 17h14" stroke="#2eaa2e" stroke-width="2"/><path d="M5 14l-4 3 4 3z" fill="#2eaa2e"/><path d="M14 4l3-4 3 4z" fill="#2b46d8"/><text x="8" y="7" font-size="6" font-weight="bold" font-family="Liberation Sans">Z</text><text x="0" y="13" font-size="6" font-weight="bold" font-family="Liberation Sans">Y</text></symbol>
<symbol id="ax-xyz" viewBox="0 0 20 20"><path d="M10 12V3" stroke="#2b46d8" stroke-width="2"/><path d="M10 12l-7 6" stroke="#2eaa2e" stroke-width="2"/><path d="M10 12l7 6" stroke="#e33" stroke-width="2"/><path d="M7 4l3-4 3 4z" fill="#2b46d8"/><text x="1" y="10" font-size="6" font-weight="bold" font-family="Liberation Sans">Y</text><text x="14" y="10" font-size="6" font-weight="bold" font-family="Liberation Sans">X</text></symbol>
</defs>
</svg>

<div class="hw-app">
<div class="hw-title">
  <svg class="hw-logo" viewBox="0 0 12 12"><path d="M6 1L1 10h10z" fill="none" stroke="#f4d8d8" stroke-width="1.500"/><path d="M6 1L3.500 5.500" stroke="#e89322" stroke-width="1.500"/><path d="M1 10h5" stroke="#c33" stroke-width="1.500"/></svg>
  modello9.1.mvw - HyperWorks v14.0
  <div class="hw-winbtns d-flex">
    <div class="hw-winbtn">–</div>
    <div class="hw-winbtn">❐</div>
    <div class="hw-winbtn hw-close">✕</div>
  </div>
</div>

<ul class="hw-menu d-flex">
  <li>File</li><li>Edit</li><li>View</li><li>Model</li><li>Results</li><li>Annotations</li><li>Tools</li><li>Preferences</li><li>Applications</li><li>Help</li>
</ul>

<div class="hw-tb d-flex align-items-center">
  <div class="hw-dots"></div><svg class="hw-ic hw-l1"><use href="#i-new"/></svg><span class="hw-car"></span>
  <svg class="hw-ic"><use href="#i-open"/></svg><span class="hw-car"></span>
  <svg class="hw-ic"><use href="#i-save"/></svg><span class="hw-car"></span>
  <svg class="hw-ic"><use href="#i-ag"/></svg><span class="hw-car"></span>
  <svg class="hw-ic"><use href="#i-ar"/></svg><span class="hw-car"></span>
  <svg class="hw-ic"><use href="#i-ppt"/></svg><span class="hw-car"></span>
  <div class="hw-vsep"></div>
  <svg class="hw-ic16 hw-l6 hw-faint"><use href="#i-person"/></svg>
  <svg class="hw-ic hw-l2"><use href="#i-fcol"/></svg><span class="hw-car"></span>
  <div class="hw-dots hw-l4"></div>
  <svg class="hw-ic14 hw-l3"><use href="#i-l"/></svg>
  <svg class="hw-ic14 hw-l5"><use href="#i-r"/></svg>
  <svg class="hw-ic16 hw-l4"><use href="#i-wadd"/></svg>
  <svg class="hw-ic16 hw-l4"><use href="#i-wdel"/></svg>
  <svg class="hw-ic16 hw-l4"><use href="#i-wbig"/></svg><span class="hw-car"></span>
  <svg class="hw-ic16 hw-l2"><use href="#i-wg1"/></svg>
  <svg class="hw-ic16 hw-l5"><use href="#i-wg2"/></svg>
  <svg class="hw-ic16 hw-l2"><use href="#i-wsync"/></svg>
  <div class="hw-dots hw-l6"></div>
  <svg class="hw-ic16 hw-l4"><use href="#i-cut"/></svg>
  <svg class="hw-ic16 hw-l3"><use href="#i-copy"/></svg><span class="hw-car"></span>
  <svg class="hw-ic16"><use href="#i-paste"/></svg><span class="hw-car hw-faint"></span>
  <svg class="hw-ic16 hw-l2"><use href="#i-paste"/></svg><span class="hw-car hw-faint"></span>
  <div class="hw-dots hw-l2"></div>
  <svg class="hw-ic16 hw-l2"><use href="#i-zoomb"/></svg>
  <svg class="hw-ic16 hw-l5"><use href="#i-pl"/></svg>
  <svg class="hw-ic16 hw-l4"><use href="#ax-yx"/></svg>
  <svg class="hw-ic16 hw-l3"><use href="#ax-xy"/></svg>
  <svg class="hw-ic16 hw-l3"><use href="#ax-zx"/></svg>
  <svg class="hw-ic16 hw-l3"><use href="#ax-xz"/></svg>
  <svg class="hw-ic16 hw-l3"><use href="#ax-zy"/></svg>
  <svg class="hw-ic16 hw-l3"><use href="#ax-yz"/></svg>
  <svg class="hw-ic16 hw-l3"><use href="#ax-xyz"/></svg>
  <svg class="hw-ic16 hw-l5"><use href="#i-screen"/></svg>
  <svg class="hw-ic16 hw-l5"><use href="#i-ghost"/></svg><span class="hw-car hw-faint"></span>
  <div class="hw-dots hw-l6"></div>
  <svg class="hw-ic16 hw-l3"><use href="#i-zm"/></svg>
  <svg class="hw-ic16 hw-l3"><use href="#i-zg"/></svg>
  <svg class="hw-ic14 hw-l5"><use href="#i-rot"/></svg>
  <svg class="hw-ic16 hw-l5"><use href="#i-hand"/></svg>
  <svg class="hw-ic16 hw-l3"><use href="#i-hh"/></svg>
  <svg class="hw-ic16 hw-l3"><use href="#i-vv"/></svg>
  <svg class="hw-ic16 hw-l5"><use href="#i-br"/></svg>
</div>

<div class="hw-tb2 d-flex align-items-center">
  <div class="hw-dots"></div>
  <svg class="hw-ic16 hw-l3"><use href="#c1"/></svg>
  <svg class="hw-ic16 hw-l3"><use href="#c2"/></svg>
  <svg class="hw-ic16 hw-l4"><use href="#c3"/></svg>
  <svg class="hw-ic16 hw-l4"><use href="#c4"/></svg>
  <svg class="hw-ic16 hw-l3"><use href="#c5"/></svg>
  <svg class="hw-ic16 hw-l3"><use href="#c6"/></svg>
  <svg class="hw-ic16 hw-l3"><use href="#c7"/></svg>
</div>

<div class="hw-main d-flex">
  <div class="hw-left">
    <ul class="nav nav-tabs hw-tabs">
      <li class="nav-item"><a class="nav-link">Session</a></li>
      <li class="nav-item"><a class="nav-link active">Results<span class="hw-x">✕</span></a></li>
    </ul>
    <div class="hw-box">
      <div class="hw-strip d-flex align-items-center">
        <svg class="hw-ic16"><use href="#p1"/></svg>
        <div class="hw-hot"><svg class="hw-ic16"><use href="#p2"/></svg></div>
        <svg class="hw-ic16"><use href="#p3"/></svg>
        <svg class="hw-ic16"><use href="#p4"/></svg>
        <svg class="hw-ic16"><use href="#p5"/></svg>
        <svg class="hw-ic16"><use href="#p6"/></svg>
      </div>
      <div class="hw-head d-flex align-items-center">
        <div class="hw-sort hw-files">Files</div>
        <div class="hw-cell d-flex align-items-center">ID</div>
        <div class="hw-cell d-flex align-items-center"><span class="hw-wheel"></span></div>
        <div class="hw-cell d-flex align-items-center"><svg class="hw-ic14"><use href="#i-cube"/></svg></div>
      </div>
      <div class="hw-filelist hw-lines">
        <div class="hw-filerow d-flex align-items-center">
          <svg class="hw-ic14"><use href="#i-balls"/></svg><span class="hw-l4">1</span><span class="hw-l5">1</span><span class="hw-sq hw-red hw-l3"></span><svg class="hw-ic12 hw-l5"><use href="#i-slab"/></svg>
        </div>
      </div>
      <div class="hw-split"></div>
      <div class="hw-selrow d-flex">
        <div class="hw-spin"></div>
        <select class="form-select hw-sel hw-plain"><option>Subcase 1 (loadstep1)</option></select>
      </div>
      <div class="hw-selrow d-flex">
        <div class="hw-spin"></div>
        <select class="form-select hw-sel hw-plain"><option>Static Analysis</option></select>
      </div>
      <div class="hw-tools d-flex align-items-center">
        <svg class="hw-ic16"><use href="#i-ls"/></svg>
        <svg class="hw-ic16 hw-l4"><use href="#i-ls2"/></svg>
        <svg class="hw-ic16 hw-l3"><use href="#i-ls3"/></svg>
        <div class="hw-dotsb"></div>
        <svg class="hw-ic16"><use href="#i-slab"/></svg><span class="hw-car"></span>
        <svg class="hw-ic14 hw-l2"><use href="#i-cursor"/></svg>
        <svg class="hw-ic16 hw-l6"><use href="#i-ysel"/></svg>
        <svg class="hw-ic16 hw-l6"><use href="#i-eyepm"/></svg>
        <svg class="hw-ic16 hw-l4"><use href="#i-eye1"/></svg>
      </div>
      <div class="hw-entities d-flex align-items-center">
        <div class="hw-sort">Entities</div>
        <span class="hw-info hw-l3">i</span>
        <span class="hw-l1">ID</span>
        <span class="hw-wheel hw-l3"></span>
        <svg class="hw-ic14 hw-l1"><use href="#i-cubep"/></svg>
      </div>
      <div class="hw-tree hw-lines">
        <div class="hw-node d-flex align-items-center"><span class="hw-exp"></span><svg class="hw-ic14"><use href="#i-open"/></svg><span class="hw-l3">Assembly Hierarchy</span></div>
        <div class="hw-node hw-child hw-selected d-flex align-items-center"><svg class="hw-ic12 hw-faint"><use href="#g3"/></svg><span class="hw-childname">3D_mesh_piano</span><span class="hw-num">2</span><span class="hw-sq hw-blue"></span><svg class="hw-ic12 hw-l3"><use href="#i-cubep"/></svg></div>
        <div class="hw-node hw-child d-flex align-items-center"><svg class="hw-ic12 hw-l1"><use href="#g3"/></svg><span class="hw-childname">3D_semicilindro_mesh</span><span class="hw-num">4</span><span class="hw-sq hw-yel"></span><svg class="hw-ic12 hw-l3"><use href="#i-cubep"/></svg></div>
        <div class="hw-node d-flex align-items-center"><span class="hw-exp hw-plus"></span><svg class="hw-ic14"><use href="#i-comp"/></svg>Components (2)</div>
        <div class="hw-node d-flex align-items-center"><span class="hw-exp hw-plus"></span><svg class="hw-ic14"><use href="#i-folder"/></svg>Load Cases</div>
        <div class="hw-node d-flex align-items-center"><span class="hw-exp hw-plus"></span><svg class="hw-ic14"><use href="#i-notes"/></svg>Notes (1)</div>
        <div class="hw-node d-flex align-items-center"><span class="hw-exp hw-plus"></span><svg class="hw-ic14"><use href="#i-styles"/></svg>Plot Styles (3)</div>
        <div class="hw-node d-flex align-items-center"><span class="hw-exp hw-plus"></span><svg class="hw-ic14"><use href="#i-folder"/></svg>Results</div>
        <div class="hw-node d-flex align-items-center"><span class="hw-exp hw-plus"></span><svg class="hw-ic14"><use href="#i-sets"/></svg>Sets&nbsp; (1)</div>
        <div class="hw-node d-flex align-items-center"><span class="hw-exp hw-plus"></span><svg class="hw-ic14"><use href="#i-views"/></svg>Views (1)</div>
        <div class="hw-node d-flex align-items-center"><span class="hw-exp hw-plus"></span><svg class="hw-ic14"><use href="#i-meas"/></svg>Measures (2)</div>
      </div>
      <div class="hw-split"></div>
      <div class="hw-propwrap d-flex">
        <div class="hw-props">
          <div class="hw-phead d-flex"><span>Name</span><span>Value</span></div>
          <div class="hw-group d-flex align-items-center"><span class="hw-exp"></span>Standard</div>
          <div class="hw-prop d-flex align-items-center hw-dim"><span>ID</span><span>2</span></div>
          <div class="hw-prop d-flex align-items-center"><span>Visibility</span><input class="hw-check" type="checkbox" disabled></div>
          <div class="hw-prop d-flex align-items-center hw-dim"><span>Label</span><span>3D_mesh_piano</span></div>
          <div class="hw-group d-flex align-items-center"><span class="hw-exp"></span>Display</div>
          <div class="hw-prop d-flex align-items-center"><span>Color</span><span class="hw-colorbar"></span></div>
          <div class="hw-prop d-flex align-items-center"><span>ID Visibility</span><input class="hw-check" type="checkbox" disabled></div>
          <div class="hw-prop d-flex align-items-center"><span>FE Style</span><svg class="hw-ic12"><use href="#i-cubep"/></svg></div>
        </div>
        <div class="hw-scroll"><div class="hw-thumb"></div></div>
      </div>
    </div>
  </div>

  <div class="hw-right">
    <div class="hw-vhead">Analysis Results<span class="hw-pagecount">1 of 1</span></div>
    <div class="hw-vrow d-flex">
      <div class="hw-side d-flex flex-column">
        <div class="hw-hdots"></div>
        <div class="hw-slot d-flex"><svg class="hw-ic16"><use href="#g1"/></svg></div>
        <div class="hw-slot d-flex"><svg class="hw-ic16"><use href="#g2"/></svg></div>
        <div class="hw-slot d-flex"><svg class="hw-ic16"><use href="#g3"/></svg></div>
        <div class="hw-slot d-flex"><svg class="hw-ic16"><use href="#g3"/></svg></div>
        <div class="hw-slot d-flex"><svg class="hw-ic16"><use href="#g5"/></svg></div>
        <div class="hw-slot d-flex"><svg class="hw-ic16"><use href="#g6"/></svg></div>
        <div class="hw-slot d-flex"><svg class="hw-ic16"><use href="#g7"/></svg></div>
        <div class="hw-hdots mt-1 mb-1"></div>
        <div class="hw-slot d-flex"><svg class="hw-ic14"><use href="#i-slab"/></svg><span class="hw-car"></span></div>
        <div class="hw-slot d-flex"><svg class="hw-ic16"><use href="#i-eye1"/></svg></div>
        <div class="hw-slot d-flex"><svg class="hw-ic16"><use href="#e1"/></svg></div>
        <div class="hw-slot d-flex"><svg class="hw-ic16"><use href="#e2"/></svg></div>
        <div class="hw-slot d-flex"><svg class="hw-ic16"><use href="#e3"/></svg></div>
        <div class="hw-slot d-flex"><svg class="hw-ic16"><use href="#e4"/></svg></div>
        <div class="hw-slot d-flex"><svg class="hw-ic16"><use href="#g3"/></svg></div>
      </div>
      <div class="hw-view">
        <svg class="hw-shape" viewBox="0 0 1560 750">
          <defs><clipPath id="plate"><path d="M25 132L305 75 530 37 740 18H800L1075 40 1300 77 1520 115C1490 250 1420 350 1375 415 1290 510 1170 600 1035 628 990 635 930 640 900 612 890 590 885 570 880 570H700C685 580 690 590 670 615 640 640 590 645 545 637 480 632 430 610 405 600 340 570 290 530 245 497 170 420 130 370 95 315 60 250 35 180 25 132Z"/></clipPath></defs>
          <path d="M25 132C35 180 60 250 95 315 130 370 170 420 245 497 290 530 340 570 405 600 430 610 480 632 545 645 590 652 640 650 670 625 685 610 680 590 700 590H880C895 590 885 610 905 622 930 645 990 645 1035 636 1170 608 1290 520 1375 425 1420 360 1490 260 1520 120" fill="none" stroke="#0b2233" stroke-width="9"/>
          <g clip-path="url(#plate)">
            <rect width="1560" height="750" fill="#2dffdc"/>
            <path d="M0 0H149L92 330 0 300z" fill="#0000d8"/>
            <path d="M149 0H320L305 75 285 170 255 340 245 520 92 330z" fill="#1a90ff"/>
            <path d="M320 0H560L530 37 480 110 440 200 410 310 400 460 405 620 245 520 255 340 285 170 305 75z" fill="#00e6ff"/>
            <path d="M1050 0H1290L1300 77 1330 170 1355 290 1375 425 1200 580 1195 400 1165 240 1130 150 1075 40z" fill="#00e6ff"/>
            <path d="M1290 0H1495L1505 110 1520 300 1375 425 1355 290 1330 170 1300 77z" fill="#1a90ff"/>
            <path d="M1495 0H1560V200L1510 135z" fill="#0000d8"/>
            <path d="M810 155L900 195 960 250 1005 310 1045 440 1050 540 1035 650H545L530 540 535 430 565 340 630 235 705 172z" fill="#44ff00"/>
            <path d="M785 375L860 400 905 450 945 540 935 640H640L622 570 635 480 680 425 730 390z" fill="#c4ff00"/>
            <path d="M785 512L850 525 890 560 890 600H680L680 570 695 540 740 522z" fill="#ffff00"/>
          </g>
          <path d="M668 618C682 605 680 575 705 566 720 572 740 578 760 574 800 568 850 570 884 566 890 590 888 600 892 610H680z" fill="url(#notch)"/>
        </svg>
        <div class="hw-legend">
          <div>Contour Plot</div>
          <div>Displacement(Z)</div>
          <div>Analysis system</div>
          <div class="hw-scale">
            <div class="hw-bar">
              <div class="hw-b1"></div><div class="hw-b2"></div><div class="hw-b3"></div><div class="hw-b4"></div><div class="hw-b5"></div><div class="hw-b6"></div><div class="hw-b7"></div><div class="hw-b8"></div><div class="hw-b9"></div>
            </div>
            <div class="hw-val">7.252E-03</div>
            <div class="hw-val">-2.644E-01</div>
            <div class="hw-val">-5.361E-01</div>
            <div class="hw-val">-8.078E-01</div>
            <div class="hw-val">-1.080E+00</div>
            <div class="hw-val">-1.351E+00</div>
            <div class="hw-val">-1.623E+00</div>
            <div class="hw-val">-1.895E+00</div>
            <div class="hw-val">-2.166E+00</div>
            <div class="hw-val">-2.438E+00</div>
          </div>
          <div class="hw-nores">No result</div>
          <div>Max = 7.252E-03</div>
          <div>Grids 91731</div>
          <div>Min = -2.438E+00</div>
          <div>Grids 108586</div>
        </div>
        <div class="hw-topright"><div>1: 1</div><div>Subcase 1 (loadstep1) : Static Analysis : Frame 4</div></div>
        <svg class="hw-triad" viewBox="0 0 60 52">
          <path d="M10 46V10" stroke="#2430d8" stroke-width="1.200"/><path d="M8 12l2-6 2 6z" fill="#2430d8"/>
          <path d="M10 46H40" stroke="#e02020" stroke-width="1.200"/><path d="M38 44l6 2-6 2z" fill="#e02020"/>
          <path d="M10 46l8-1" stroke="#20c020" stroke-width="1.200"/>
          <text x="7" y="5" font-size="9" fill="#223" font-family="Liberation Sans">Z</text><text x="46" y="49" font-size="9" fill="#223" font-family="Liberation Sans">X</text>
        </svg>
      </div>
    </div>

    <div class="hw-tb3 d-flex align-items-center">
      <div class="hw-dots"></div>
      <svg class="hw-ic16 hw-l3"><use href="#b-ct"/></svg><span class="hw-car"></span>
      <div class="hw-dots hw-l4"></div>
      <span class="hw-wheel hw-wheel14 hw-l3"></span>
      <svg class="hw-ic14 hw-l7"><use href="#i-cube"/></svg>
      <select class="form-select hw-sel hw-combo"><option>By Comp</option></select>
      <svg class="hw-ic16 hw-l2"><use href="#b-wire"/></svg><span class="hw-car"></span>
      <svg class="hw-ic16 hw-l2"><use href="#b-solid"/></svg><span class="hw-car"></span>
      <svg class="hw-ic16 hw-l2"><use href="#b-blocks"/></svg>
      <svg class="hw-ic16 hw-l4"><use href="#b-mir"/></svg>
      <svg class="hw-ic16 hw-l3"><use href="#b-gr"/></svg>
      <div class="hw-dots hw-l7"></div>
      <svg class="hw-ic16 hw-l4"><use href="#b-ct"/></svg>
      <svg class="hw-ic16 hw-l4"><use href="#b-cs"/></svg>
      <svg class="hw-ic16"><use href="#b-ax"/></svg>
      <svg class="hw-ic16 hw-l4"><use href="#b-hex"/></svg>
      <svg class="hw-ic16 hw-l4"><use href="#b-leg"/></svg>
      <svg class="hw-ic16 hw-l3"><use href="#b-dn"/></svg>
      <svg class="hw-ic16 hw-l4"><use href="#b-vx"/></svg>
      <svg class="hw-ic16 hw-l4"><use href="#b-w"/></svg>
      <svg class="hw-ic16 hw-l3"><use href="#b-sat"/></svg>
      <svg class="hw-ic16 hw-l2"><use href="#b-inf"/></svg>
      <svg class="hw-ic16 hw-l4"><use href="#b-z"/></svg>
      <svg class="hw-ic16 hw-l3"><use href="#b-t"/></svg>
      <div class="hw-dots hw-l8"></div>
      <svg class="hw-ic16 hw-l1"><use href="#b-ex"/></svg>
      <svg class="hw-ic16 hw-l3"><use href="#b-bub"/></svg>
      <svg class="hw-ic16 hw-l6"><use href="#b-leg"/></svg>
      <svg class="hw-ic16 hw-l2"><use href="#b-cl2"/></svg>
    </div>
    <div class="hw-tb3 d-flex align-items-center">
      <div class="hw-dots"></div>
      <svg class="hw-ic16 hw-l3"><use href="#b-cl"/></svg><span class="hw-car"></span>
      <svg class="hw-ic15 hw-l2"><use href="#m1"/></svg>
      <svg class="hw-ic15 hw-l4"><use href="#m2"/></svg>
      <svg class="hw-ic15 hw-l4"><use href="#m3"/></svg>
      <svg class="hw-ic15 hw-l4"><use href="#m4"/></svg>
      <svg class="hw-ic15 hw-l4"><use href="#m5"/></svg>
      <div class="hw-sbar">
        <div class="hw-s1"><div class="hw-knob"></div></div>
        <div class="hw-s2"><div class="hw-knob"></div></div>
      </div>
      <svg class="hw-ic15 hw-l4"><use href="#b-gear"/></svg>
    </div>

    <div class="hw-panel d-flex">
      <div class="hw-c1">
        <div class="d-flex"><span class="hw-lab">Result type:</span><button class="btn hw-btn hw-dotbtn">...</button></div>
        <select class="form-select hw-sel hw-f1"><option>Displacement (v)</option></select>
        <select class="form-select hw-sel hw-f2"><option>Z</option></select>
        <div class="hw-layers d-flex align-items-center">
          <span class="hw-lab">Layers:</span>
          <select class="form-select hw-sel hw-laysel" disabled></select>
          <svg class="hw-ic16 hw-l4"><use href="#i-funnel"/></svg>
          <span class="hw-car hw-faint"></span>
          <svg class="hw-ic16 hw-l3"><use href="#i-lay"/></svg>
        </div>
        <div class="hw-chkrow hw-cr1 d-flex align-items-center"><input class="hw-check" type="checkbox" disabled>Use corner data</div>
      </div>
      <div class="hw-c2">
        <div class="hw-lab">Selection:</div>
        <div class="hw-selbtns d-flex">
          <button class="btn hw-btn hw-hbtn d-flex align-items-center justify-content-center"><svg class="hw-ic12"><use href="#i-drop"/></svg></button>
          <button class="btn hw-btn hw-yellow hw-active">Components</button>
          <button class="btn hw-btn hw-hbtn d-flex align-items-center justify-content-center"><svg class="hw-ic12"><use href="#i-first"/></svg></button>
        </div>
        <div class="hw-lab hw-lab2">Resolved in:</div>
        <select class="form-select hw-sel hw-f3"><option>Analysis System</option></select>
        <div class="hw-selbtns2 d-flex">
          <button class="btn hw-btn hw-yellow" disabled>System</button>
          <button class="btn hw-btn hw-hbtn d-flex align-items-center justify-content-center" disabled><svg class="hw-ic12"><use href="#i-firstg"/></svg></button>
        </div>
        <div class="hw-chkrow hw-cr2 d-flex align-items-center"><input class="hw-check" type="checkbox" disabled>Use tracking system</div>
      </div>
      <div class="hw-c3">
        <div class="hw-lab">Averaging method:</div>
        <select class="form-select hw-sel hw-f4" disabled><option>None</option></select>
        <div class="hw-chkrow hw-cr3 d-flex align-items-center"><input class="hw-check" type="checkbox" disabled>Variation &lt;<span class="hw-num10">10</span><span class="hw-pct">[%]</span></div>
        <button class="btn hw-btn hw-optbtn" disabled>Averaging Options...</button>
        <div class="hw-lab hw-lab3">Envelope trace plot:</div>
        <select class="form-select hw-sel hw-f4" disabled><option>None</option></select>
      </div>
      <div class="hw-c4">
        <div class="hw-lab">Value filter:</div>
        <select class="form-select hw-sel hw-f5"><option>None</option></select>
        <div class="hw-input"></div>
        <div class="hw-input"></div>
        <button class="btn hw-btn hw-bigbtn">Cache</button>
        <button class="btn hw-btn hw-bigbtn hw-next">Apply</button>
      </div>
      <div class="hw-vbar"></div>
      <div class="hw-c5">
        <ul class="nav nav-tabs hw-minitabs">
          <li class="nav-item"><a class="nav-link">Display</a></li>
          <li class="nav-item"><a class="nav-link">Legend</a></li>
          <li class="nav-item"><a class="nav-link active">Result</a></li>
        </ul>
        <div class="hw-tabbox">
          <div class="hw-ovl d-flex align-items-center"><input class="hw-check hw-w" type="checkbox">Overlay result display</div>
          <button class="btn hw-btn hw-tabbtn">Clear Contour</button>
          <button class="btn hw-btn hw-tabbtn">Create Plot Style...</button>
          <button class="btn hw-btn hw-tabbtn">Show Iso Value</button>
          <button class="btn hw-btn hw-tabbtn" disabled>Projection Rule...</button>
          <button class="btn hw-btn hw-tabbtn">Query Results...</button>
        </div>
      </div>
    </div>
  </div>
</div>

<div class="hw-status">Ready</div>
<div class="hw-task d-flex">
  <div class="hw-t1"></div><div class="hw-t2"></div><div class="hw-t3"></div><div class="hw-t4"></div><div class="hw-t5"></div><div class="hw-t6"></div>
</div>
</div>
</body>
</html>
